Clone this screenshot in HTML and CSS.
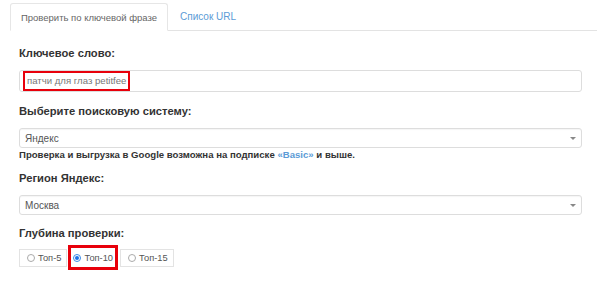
FILE: index.html
```html
<!DOCTYPE html>
<html lang="ru">
<head>
<meta charset="utf-8">
<link rel="stylesheet" href="styles.css">
</head>
<body>
<div class="page">
  <ul class="tabs">
    <li class="tab active">Проверить по ключевой фразе</li>
    <li class="tab link">Список URL</li>
    <li class="tab-fill"></li>
  </ul>
  <div class="content">
    <div class="group">
      <div class="label">Ключевое слово:</div>
      <div class="input"><span class="hl">патчи для глаз petitfee</span></div>
    </div>
    <div class="group">
      <div class="label">Выберите поисковую систему:</div>
      <div class="select"><span>Яндекс</span><span class="caret"></span></div>
      <div class="help">Проверка и выгрузка в Google возможна на подписке <span class="blue">«Basic»</span> и выше.</div>
    </div>
    <div class="group">
      <div class="label">Регион Яндекс:</div>
      <div class="select"><span>Москва</span><span class="caret"></span></div>
    </div>
    <div class="group">
      <div class="label label-tight">Глубина проверки:</div>
      <div class="radios">
        <div class="radio"><span class="dot"></span>Топ-5</div>
        <div class="radio checked"><span class="dot"></span>Топ-10</div>
        <div class="radio"><span class="dot"></span>Топ-15</div>
      </div>
    </div>
  </div>
</div>
</body>
</html>
```

FILE: styles.css
```css
* { box-sizing: border-box; }
html, body { margin: 0; padding: 0; background: #fff; }
body {
  font-family: "Liberation Sans", Arial, sans-serif;
  color: #333;
  width: 600px;
  height: 282px;
  overflow: hidden;
}
.page { padding: 3px 3px 0 10px; }
.tabs {
  list-style: none;
  margin: 0;
  padding: 0;
  display: flex;
  height: 28px;
}
.tab {
  font-size: 10px;
  white-space: nowrap;
  display: flex;
  align-items: center;
  padding: 0 12px;
  border-bottom: 1px solid #e3e3e3;
}
.tab.active {
  width: 158px;
  justify-content: center;
  padding: 0;
  font-size: 9.5px;
  color: #666;
  border: 1px solid #e6e6e6;
  border-bottom-color: transparent;
  border-radius: 3px 3px 0 0;
}
.tab.link { color: #5c9bd6; }
.tab-fill { flex: 1; border-bottom: 1px solid #e3e3e3; }
.content { padding: 15px 15px 0 9px; }
.group { margin-bottom: 11px; }
.group:first-child { margin-bottom: 12px; }
.label {
  font-size: 11.2px;
  font-weight: bold;
  line-height: 14px;
  margin-bottom: 10px;
}
.label-tight { margin-bottom: 5px; }
.input {
  height: 22px;
  border: 1px solid #ddd;
  border-radius: 3px;
  display: flex;
  align-items: center;
  padding-left: 3px;
}
.hl {
  font-size: 9.6px;
  color: #777;
  border: 2px solid #e8000b;
  padding: 0 2px;
  height: 20px;
  line-height: 16px;
}
.select {
  height: 20px;
  border: 1px solid #ddd;
  border-radius: 3px;
  display: flex;
  align-items: center;
  justify-content: space-between;
  padding: 0 5px 0 5px;
  font-size: 10px;
  color: #555;
  box-shadow: inset 0 1px 1px rgba(0,0,0,0.04);
}
.caret {
  width: 0; height: 0;
  border-left: 3px solid transparent;
  border-right: 3px solid transparent;
  border-top: 3px solid #888;
}
.help {
  font-size: 9.6px;
  font-weight: bold;
  color: #333;
  margin-top: 1px;
  line-height: 11px;
}
.blue { color: #5c9bd6; }
.radios { display: flex; align-items: center; height: 25px; }
.radio {
  display: flex;
  align-items: center;
  font-size: 9.3px;
  color: #555;
  height: 18px;
  border: 1px solid #e3e3e3;
  padding: 0 5px 0 7px;
}
.radio + .radio { margin-left: 1px; }
.radio.checked + .radio { margin-left: 2px; }
.radio.checked {
  border: 3px solid #e8000b;
  height: 25px;
  padding: 0 2px 0 2px;
}
.dot {
  width: 8px; height: 8px;
  border: 1px solid #aaa;
  border-radius: 50%;
  margin-right: 3px;
  position: relative;
}
.radio.checked .dot { border-color: #3b8ae6; }
.radio.checked .dot::after {
  content: "";
  position: absolute;
  left: 1px; top: 1px;
  width: 4px; height: 4px;
  border-radius: 50%;
  background: #1a73e8;
}
```
